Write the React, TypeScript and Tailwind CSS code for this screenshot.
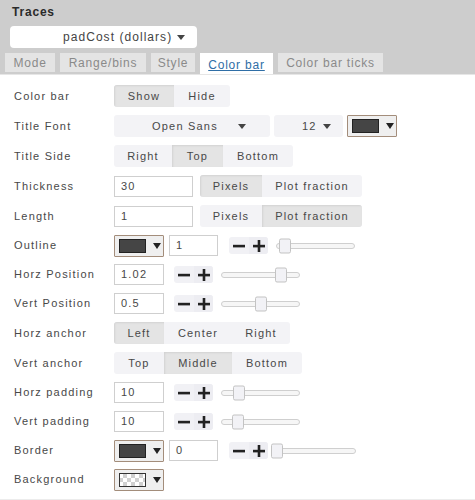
import React from "react";

const F = "font-['Liberation_Sans',Arial,sans-serif]";

function Caret() {
  return (
    <svg width="8" height="5" viewBox="0 0 8 5" className="shrink-0">
      <path d="M0 0h8L4 5z" fill="#444" />
    </svg>
  );
}

function Swatch({ checker }: { checker?: boolean }) {
  return (
    <div className="flex h-[22px] w-[50px] items-center rounded-[1px] border border-[#a38d7b] bg-[#efefef] pl-[4px]">
      {checker ? (
        <svg width="27" height="14" viewBox="0 0 27 14" className="shrink-0">
          <rect x="0.5" y="0.5" width="26" height="13" fill="#fff" stroke="#333" />
          <rect x="4" y="1" width="4" height="4" fill="#d0d0d0" />
          <rect x="12" y="1" width="4" height="4" fill="#d0d0d0" />
          <rect x="20" y="1" width="4" height="4" fill="#d0d0d0" />
          <rect x="1" y="5" width="3" height="4" fill="#d0d0d0" />
          <rect x="8" y="5" width="4" height="4" fill="#d0d0d0" />
          <rect x="16" y="5" width="4" height="4" fill="#d0d0d0" />
          <rect x="24" y="5" width="2" height="4" fill="#d0d0d0" />
          <rect x="4" y="9" width="4" height="4" fill="#d0d0d0" />
          <rect x="12" y="9" width="4" height="4" fill="#d0d0d0" />
          <rect x="20" y="9" width="4" height="4" fill="#d0d0d0" />
        </svg>
      ) : (
        <div className="h-[14px] w-[27px] shrink-0 border border-[#222] bg-[#454545]" />
      )}
      <svg width="8" height="6" viewBox="0 0 8 6" className="ml-[7px] shrink-0">
        <path d="M0 0h8L4 6z" fill="#222" />
      </svg>
    </div>
  );
}

function PM({ className = "" }: { className?: string }) {
  return (
    <div className={"flex h-[17px] overflow-hidden rounded-[3px] bg-[#f1f1f5] " + className}>
      <div className="flex w-[20px] items-center justify-center">
        <svg width="12" height="12" viewBox="0 0 12 12">
          <rect x="0" y="4.8" width="12" height="2.6" fill="#222" />
        </svg>
      </div>
      <div className="flex w-[19px] items-center justify-center bg-[#ededf2]">
        <svg width="12" height="12" viewBox="0 0 12 12">
          <rect x="0" y="4.8" width="12" height="2.6" fill="#222" />
          <rect x="4.7" y="0" width="2.6" height="12" fill="#222" />
        </svg>
      </div>
    </div>
  );
}

function Slider({ className, thumb }: { className: string; thumb: string }) {
  return (
    <div className={"relative h-[6px] rounded-full border border-[#cfcfcf] bg-[#f6f6f6] " + className}>
      <div
        className={
          "absolute top-1/2 h-[15px] w-[12px] -translate-y-1/2 rounded-[2px] border border-[#c3c3c3] bg-[#f2f2f6] " +
          thumb
        }
      />
    </div>
  );
}

function Input({ value, className }: { value: string; className: string }) {
  return (
    <div
      className={
        "flex h-[21px] items-center border border-[#cfcfcf] bg-white pl-[6px] text-[11px] text-[#484848] " + className
      }
    >
      {value}
    </div>
  );
}

type Seg = { t: string; w: string; a?: boolean };

function Segs({ items, className = "" }: { items: Seg[]; className?: string }) {
  return (
    <div className={"flex h-[22px] overflow-hidden rounded-[3px] bg-[#f3f3f6] " + className}>
      {items.map((s) => (
        <div
          key={s.t}
          className={
            "flex items-center justify-center text-[11px] text-[#484848] " +
            s.w +
            (s.a ? " bg-[#e4e4e4] shadow-[inset_1px_1px_2px_rgba(0,0,0,0.08)]" : "")
          }
        >
          {s.t}
        </div>
      ))}
    </div>
  );
}

function Row({ label, h, children }: { label: string; h: string; children?: React.ReactNode }) {
  return (
    <div className={"flex items-center " + h}>
      <div className="w-[114px] shrink-0 pl-[14px] text-[11px] text-[#484848]">{label}</div>
      {children}
    </div>
  );
}

export default function App() {
  return (
    <div className={"relative h-[500px] w-[475px] overflow-hidden bg-white tracking-[1.2px] " + F}>
      <div className="h-[75px] border-b border-[#e6e6e6] bg-[#cdcdcd]">
        <div className="pl-[12px] pt-[5px] text-[12px] font-bold leading-[14px] tracking-[0.8px] text-[#2a2a2a]">Traces</div>
        <div className="ml-[10px] mt-[7px] flex h-[22px] w-[187px] items-center rounded-[4px] bg-white pl-[53px] text-[12px] tracking-[1.05px] text-[#444]">
          <span>padCost (dollars)</span>
          <span className="ml-[5px]">
            <Caret />
          </span>
        </div>
        <div className="ml-[5px] mt-[5px] flex h-[21px] gap-[5px] tracking-[0.8px]">
          <div className="flex h-[19px] w-[50px] items-center justify-center bg-[#e4e4e4] text-[12px] text-[#8a8a8a]">Mode</div>
          <div className="flex h-[19px] w-[86px] items-center justify-center bg-[#e4e4e4] text-[12px] text-[#8a8a8a]">Range/bins</div>
          <div className="flex h-[19px] w-[44px] items-center justify-center bg-[#e4e4e4] text-[12px] text-[#8a8a8a]">Style</div>
          <div className="flex h-[21px] w-[73px] items-start justify-center bg-white pt-[3px] text-[12px] text-[#2f6ea6] underline">Color bar</div>
          <div className="flex h-[19px] w-[105px] items-center justify-center bg-[#e4e4e4] text-[12px] text-[#8a8a8a]">Color bar ticks</div>
        </div>
      </div>

      <div className="flex flex-col pt-[6px]">
        <Row label="Color bar" h="h-[30px]">
          <Segs items={[{ t: "Show", w: "w-[60px]", a: true }, { t: "Hide", w: "w-[56px]" }]} />
        </Row>
        <Row label="Title Font" h="h-[30px]">
          <div className="flex h-[22px] w-[156px] items-center rounded-[3px] bg-[#f3f3f6] text-[11px] text-[#484848]">
            <span className="ml-[38px]">Open Sans</span>
            <span className="ml-[20px]"><Caret /></span>
          </div>
          <div className="ml-[4px] flex h-[22px] w-[69px] items-center rounded-[3px] bg-[#f3f3f6] text-[11px] text-[#484848]">
            <span className="ml-[28px]">12</span>
            <span className="ml-[6px]"><Caret /></span>
          </div>
          <div className="ml-[4px]">
            <Swatch />
          </div>
        </Row>
        <Row label="Title Side" h="h-[30px]">
          <Segs
            items={[
              { t: "Right", w: "w-[58px]" },
              { t: "Top", w: "w-[51px]", a: true },
              { t: "Bottom", w: "w-[70px]" },
            ]}
          />
        </Row>
        <Row label="Thickness" h="h-[30px]">
          <Input value="30" className="w-[79px]" />
          <Segs
            className="ml-[7px]"
            items={[
              { t: "Pixels", w: "w-[62px]", a: true },
              { t: "Plot fraction", w: "w-[100px]" },
            ]}
          />
        </Row>
        <Row label="Length" h="h-[30px]">
          <Input value="1" className="w-[79px]" />
          <Segs
            className="ml-[7px]"
            items={[
              { t: "Pixels", w: "w-[62px]" },
              { t: "Plot fraction", w: "w-[100px]", a: true },
            ]}
          />
        </Row>
        <Row label="Outline" h="h-[29px]">
          <Swatch />
          <Input value="1" className="ml-[5px] w-[49px]" />
          <PM className="ml-[11px]" />
          <Slider className="ml-[8px] w-[79px]" thumb="left-[2px]" />
        </Row>
        <Row label="Horz Position" h="h-[29px]">
          <Input value="1.02" className="w-[50px]" />
          <PM className="ml-[10px]" />
          <Slider className="ml-[8px] w-[79px]" thumb="left-[53px]" />
        </Row>
        <Row label="Vert Position" h="h-[29px]">
          <Input value="0.5" className="w-[50px]" />
          <PM className="ml-[10px]" />
          <Slider className="ml-[8px] w-[79px]" thumb="left-[33px]" />
        </Row>
        <Row label="Horz anchor" h="h-[30px]">
          <Segs
            items={[
              { t: "Left", w: "w-[50px]", a: true },
              { t: "Center", w: "w-[68px]" },
              { t: "Right", w: "w-[58px]" },
            ]}
          />
        </Row>
        <Row label="Vert anchor" h="h-[30px]">
          <Segs
            items={[
              { t: "Top", w: "w-[50px]" },
              { t: "Middle", w: "w-[68px]", a: true },
              { t: "Bottom", w: "w-[70px]" },
            ]}
          />
        </Row>
        <Row label="Horz padding" h="h-[29px]">
          <Input value="10" className="w-[50px]" />
          <PM className="ml-[10px]" />
          <Slider className="ml-[8px] w-[79px]" thumb="left-[11px]" />
        </Row>
        <Row label="Vert padding" h="h-[29px]">
          <Input value="10" className="w-[50px]" />
          <PM className="ml-[10px]" />
          <Slider className="ml-[8px] w-[79px]" thumb="left-[10px]" />
        </Row>
        <Row label="Border" h="h-[29px]">
          <Swatch />
          <Input value="0" className="ml-[5px] w-[49px]" />
          <PM className="ml-[11px]" />
          <Slider className="ml-[3px] w-[85px]" thumb="left-[-1px]" />
        </Row>
        <Row label="Background" h="h-[29px]">
          <Swatch checker />
        </Row>
      </div>
      <div className="absolute bottom-0 left-0 h-[1px] w-full bg-[#ececec]" />
    </div>
  );
}
